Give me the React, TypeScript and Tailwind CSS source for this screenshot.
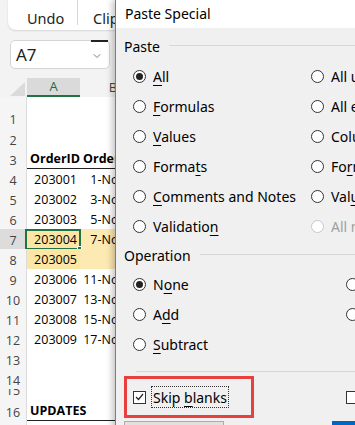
import { ChevronDown } from "lucide-react";

type Row = {
  n: number;
  h: string;
  a?: string;
  b?: string;
  bold?: boolean;
  line?: boolean;
  fill?: boolean;
  active?: boolean;
};

const rows: Row[] = [
  { n: 1, h: "h-[31px]" },
  { n: 2, h: "h-[21px]" },
  { n: 3, h: "h-[20px]", a: "OrderID", b: "OrderDate", bold: true, line: true },
  { n: 4, h: "h-[20px]", a: "203001", b: "1-Nov-22" },
  { n: 5, h: "h-[20px]", a: "203002", b: "3-Nov-22" },
  { n: 6, h: "h-[20px]", a: "203003", b: "5-Nov-22" },
  { n: 7, h: "h-[20px]", a: "203004", b: "7-Nov-22", fill: true, active: true },
  { n: 8, h: "h-[20px]", a: "203005", fill: true },
  { n: 9, h: "h-[20px]", a: "203006", b: "11-Nov-22" },
  { n: 10, h: "h-[20px]", a: "203007", b: "13-Nov-22" },
  { n: 11, h: "h-[20px]", a: "203008", b: "15-Nov-22" },
  { n: 12, h: "h-[20px]", a: "203009", b: "17-Nov-22" },
  { n: 13, h: "h-[20px]" },
  { n: 14, h: "h-[20px]" },
  { n: 15, h: "h-[10px]" },
  { n: 16, h: "h-[22px]", a: "UPDATES", bold: true, line: true },
];

function Label({ text, u }: { text: string; u: number }) {
  if (u < 0) return <span>{text}</span>;
  return (
    <span>
      {text.slice(0, u)}
      <span className="underline underline-offset-[3px] decoration-1">{text[u]}</span>
      {text.slice(u + 1)}
    </span>
  );
}

function Radio({
  text,
  u = -1,
  checked = false,
  disabled = false,
}: {
  text: string;
  u?: number;
  checked?: boolean;
  disabled?: boolean;
}) {
  return (
    <div className={`flex items-center h-[30px] gap-[7px] whitespace-nowrap ${disabled ? "text-[#a0a0a0]" : ""}`}>
      <span
        className={`w-[13px] h-[13px] shrink-0 rounded-full border bg-white flex items-center justify-center ${
          disabled ? "border-[#c8c8c8]" : "border-[#333333]"
        }`}
      >
        {checked && <span className="w-[7px] h-[7px] rounded-full bg-[#222222]" />}
      </span>
      <Label text={text} u={u} />
    </div>
  );
}

function GroupLabel({ text }: { text: string }) {
  return (
    <div className="flex items-center h-[20px] gap-[9px]">
      <span>{text}</span>
      <div className="flex-1 h-px bg-[#d7d7d7] -mt-[2px]" />
    </div>
  );
}

function Sheet() {
  return (
    <div className="w-[355px] font-['Open_Sans',sans-serif] text-[12.5px] text-black">
      {/* ribbon */}
      <div className="h-[30px] pl-[8px] flex">
        <div className="flex-1 bg-white rounded-bl-[8px] shadow-[0_1px_2px_rgba(0,0,0,0.12)] flex items-start pt-[8px] font-['Noto_Sans',sans-serif] text-[14.5px] text-[#222]">
          <span className="ml-[19px] w-[50px]">Undo</span>
          <div className="w-px h-[25px] -mt-[8px] bg-[#d6d6d6]" />
          <span className="ml-[15px]">Clipboard</span>
        </div>
      </div>

      {/* name box */}
      <div className="h-[48px] pt-[10px] pl-[10px]">
        <div className="relative w-[100px] h-[29px] bg-white border border-[#d4d4d4] rounded-[5px] flex items-center pl-[5px] font-['Noto_Sans',sans-serif] text-[17px] text-[#222]">
          A7
          <ChevronDown className="absolute right-[6px] top-[9px] w-[12px] h-[12px] text-[#555]" strokeWidth={1.5} />
          <div className="absolute -top-px right-[1px] w-[17px] h-[2px] bg-[#222]" />
        </div>
      </div>

      {/* column headers */}
      <div className="flex h-[19px] text-[13px]">
        <div className="w-[27px] flex items-end justify-end pr-[2px] pb-[1px]">
          <svg width="15" height="14" viewBox="0 0 15 14">
            <polygon points="15,0 15,14 0,14" fill="#dadada" />
          </svg>
        </div>
        <div className="w-[53px] bg-[#dadada] border-b-2 border-[#217346] flex items-center justify-center text-[#1e6b41]">
          A
        </div>
        <div className="w-[66px] flex items-center justify-center text-[#444]">B</div>
      </div>

      {/* rows */}
      <div className="flex flex-col">
        {rows.map((r) => (
          <div key={r.n} className={`flex ${r.h} overflow-hidden`}>
            <div
              className={`w-[27px] shrink-0 flex items-end justify-center leading-[17px] border-r border-[#dcdcdc] text-[#444] ${
                r.active ? "bg-[#dcdcdc]" : "bg-[#f5f5f5]"
              }`}
            >
              {r.n}
            </div>
            <div
              className={`relative w-[53px] shrink-0 flex items-end leading-[18px] ${r.fill ? "bg-[#fce6a6]" : "bg-white"} ${
                r.line ? "border-b border-[#222]" : ""
              } ${r.bold ? "font-bold justify-start pl-[3px]" : "justify-end pr-[3px]"}`}
            >
              {r.a}
              {r.active && (
                <div className="absolute -left-[2px] top-0 -right-[1px] -bottom-[1px] border-2 border-[#217346]">
                  <div className="absolute -right-[3px] -bottom-[3px] w-[5px] h-[5px] bg-[#217346] border border-white" />
                </div>
              )}
            </div>
            <div
              className={`w-[66px] shrink-0 flex items-end leading-[18px] whitespace-nowrap ${
                r.fill ? "bg-[#fde9b2]" : "bg-white"
              } ${r.line ? "border-b border-[#222]" : ""} ${
                r.bold ? "font-bold justify-start pl-[3px]" : "justify-end pr-[3px]"
              }`}
            >
              {r.bold && r.n === 16 ? "" : r.b}
            </div>
            <div className={`flex-1 bg-white ${r.line ? "border-b border-[#222]" : ""}`} />
          </div>
        ))}
        <div className="flex h-[10px]">
          <div className="w-[27px] bg-[#f5f5f5] border-r border-[#dcdcdc]" />
          <div className="flex-1 bg-white" />
        </div>
      </div>
    </div>
  );
}

function PasteSpecial() {
  return (
    <div className="absolute left-[115px] top-0 w-[430px] h-[450px] bg-[#f0f0f0] border-l border-[#7d7d7d] shadow-[-3px_0_6px_rgba(0,0,0,0.22)] font-['Noto_Sans',sans-serif] text-[14px] text-black">
      <div className="h-[28px] bg-white flex items-center pl-[9px] pb-[1px]">Paste Special</div>

      <div className="pl-[8px]">
        <div className="mt-[8px]">
          <GroupLabel text="Paste" />
        </div>
        <div className="grid grid-cols-[178px_1fr] mt-[5px] pl-[9px]">
          <Radio text="All" u={0} checked />
          <Radio text="All using Source theme" />
          <Radio text="Formulas" u={0} />
          <Radio text="All except borders" />
          <Radio text="Values" u={0} />
          <Radio text="Column widths" />
          <Radio text="Formats" u={5} />
          <Radio text="Formulas and number formats" u={2} />
          <Radio text="Comments and Notes" u={0} />
          <Radio text="Values and number formats" u={3} />
          <Radio text="Validation" u={9} />
          <Radio text="All merging conditional formats" disabled />
        </div>

        <div className="mt-[4px]">
          <GroupLabel text="Operation" />
        </div>
        <div className="grid grid-cols-[213px_1fr] mt-[4px] pl-[9px]">
          <Radio text="None" u={1} checked />
          <Radio text="Multiply" u={0} />
          <Radio text="Add" u={1} />
          <Radio text="Divide" u={0} />
          <Radio text="Subtract" u={0} />
          <div />
        </div>

        <div className="mt-[12px] ml-[12px] h-px bg-[#d7d7d7]" />

        <div className="flex items-center mt-[4px]">
          <div className="w-[130px] h-[42px] border-[3px] border-[#e8403f] flex items-center pl-[6px] gap-[5px]">
            <span className="w-[13px] h-[13px] border border-[#333] bg-white flex items-center justify-center">
              <svg width="9" height="8" viewBox="0 0 9 8">
                <path d="M1 4 L3.5 6.5 L8 1" fill="none" stroke="#222" strokeWidth="1.2" />
              </svg>
            </span>
            <span className="h-[22px] px-[1px] border border-dotted border-[#333] flex items-center">
              <Label text="Skip blanks" u={5} />
            </span>
          </div>
          <span className="ml-[92px] w-[13px] h-[13px] border border-[#333] bg-white" />
          <span className="ml-[7px]">Transpose</span>
        </div>

        <div className="flex mt-[3px]">
          <div className="w-[100px] h-[28px] bg-[#e1e1e1] border border-[#adadad] flex items-center justify-center">
            Paste <Label text=" Link" u={1} />
          </div>
          <div className="ml-[108px] w-[90px] h-[28px] bg-[#0067c0] text-white flex items-center justify-center">OK</div>
        </div>
      </div>
    </div>
  );
}

export default function App() {
  return (
    <div className="relative w-[355px] h-[425px] overflow-hidden bg-[#f3f3f3]">
      <Sheet />
      <PasteSpecial />
    </div>
  );
}
